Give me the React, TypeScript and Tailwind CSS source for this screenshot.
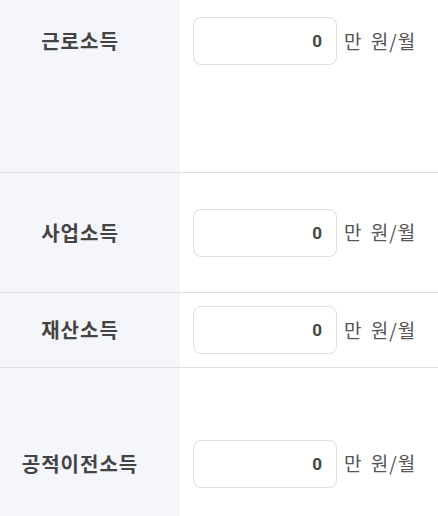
import React from "react";

const font = { fontFamily: '"Noto Sans CJK KR", "Noto Sans", sans-serif' };

function Row({ label, h, top }: { label: string; h: string; top?: boolean }) {
  return (
    <div className={`grid grid-cols-[180px_1fr] border-b border-[#e0e0e0] ${h}`}>
      <div className={`bg-[#f5f6fb] flex justify-center pr-[20px] ${top ? "items-start pt-[17px]" : "items-center"}`}>
        <div className="h-[48px] flex items-center text-[20px] font-bold text-[#444] tracking-[1px]">{label}</div>
      </div>
      <div className={`flex pl-[13px] ${top ? "items-start pt-[17px]" : "items-center"}`}>
        <input
          readOnly
          value="0"
          className="w-[144px] h-[48px] border border-[#dedede] rounded-[8px] text-right pr-[14px] text-[17px] font-bold text-[#444] bg-white outline-none"
          style={{ fontFamily: 'Roboto, "Noto Sans", sans-serif' }}
        />
        <span className="ml-[7px] text-[19px] text-[#555] tracking-[1px] [word-spacing:3px] h-[48px] flex items-center">만 원/월</span>
      </div>
    </div>
  );
}

export default function App() {
  return (
    <div className="w-[438px] h-[516px] overflow-hidden bg-white" style={font}>
      <Row label="근로소득" h="h-[173px]" top />
      <Row label="사업소득" h="h-[120px]" />
      <Row label="재산소득" h="h-[75px]" />
      <Row label="공적이전소득" h="h-[192px]" />
    </div>
  );
}
